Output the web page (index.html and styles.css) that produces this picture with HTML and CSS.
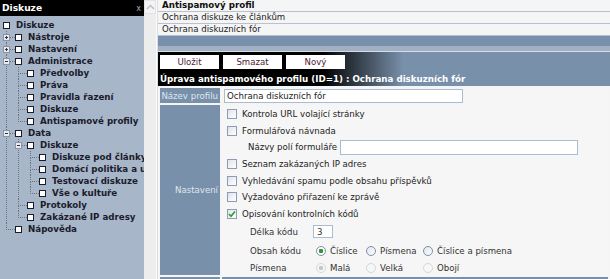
FILE: index.html
```html
<!DOCTYPE html>
<html lang="cs">
<head>
    <meta charset="UTF-8">
    <title>Antispamový profil</title>
    <link rel="stylesheet" href="styles.css">
</head>
<body>
    <div class="app">
        <aside class="side">
            <div class="side-title"><span>Diskuze</span><span class="side-close">x</span></div>
            <ul class="tree">
                <li>
                    <div class="node"><i class="cb"></i>Diskuze</div>
                    <ul>
                        <li><i class="exp plus"></i><div class="node"><i class="cb"></i>Nástroje</div></li>
                        <li><i class="exp plus"></i><div class="node"><i class="cb"></i>Nastavení</div></li>
                        <li><i class="exp"></i><div class="node"><i class="cb"></i>Administrace</div>
                            <ul>
                                <li><div class="node"><i class="cb"></i>Předvolby</div></li>
                                <li><div class="node"><i class="cb"></i>Práva</div></li>
                                <li><div class="node"><i class="cb"></i>Pravidla řazení</div></li>
                                <li><div class="node"><i class="cb"></i>Diskuze</div></li>
                                <li><div class="node"><i class="cb"></i>Antispamové profily</div></li>
                            </ul>
                        </li>
                        <li><i class="exp"></i><div class="node"><i class="cb"></i>Data</div>
                            <ul>
                                <li><i class="exp"></i><div class="node"><i class="cb"></i>Diskuze</div>
                                    <ul>
                                        <li><div class="node"><i class="cb"></i>Diskuze pod články</div></li>
                                        <li><div class="node"><i class="cb"></i>Domácí politika a události</div></li>
                                        <li><div class="node"><i class="cb"></i>Testovací diskuze</div></li>
                                        <li><div class="node"><i class="cb"></i>Vše o kultuře</div></li>
                                    </ul>
                                </li>
                                <li><div class="node"><i class="cb"></i>Protokoly</div></li>
                                <li><div class="node"><i class="cb"></i>Zakázané IP adresy</div></li>
                            </ul>
                        </li>
                        <li><div class="node"><i class="cb"></i>Nápověda</div></li>
                    </ul>
                </li>
            </ul>
        </aside>

        <div class="scrollbar">
            <div class="scroll-up">
                <svg width="9" height="6" viewBox="0 0 9 6"><path d="M1 5L4.5 1.5L8 5" fill="none" stroke="#b8bcc4" stroke-width="1.3"/></svg>
            </div>
        </div>

        <main class="content">
            <div class="list">
                <div class="list-head">Antispamový profil</div>
                <div class="list-row">Ochrana diskuze ke článkům</div>
                <div class="list-row">Ochrana diskuzních fór</div>
            </div>
            <div class="band"></div>
            <div class="band-light"></div>

            <div class="editor-head">
                <div class="toolbar">
                    <button class="btn">Uložit</button>
                    <button class="btn">Smazat</button>
                    <button class="btn">Nový</button>
                </div>
                <div class="editor-title">Úprava antispamového profilu (ID=1) : Ochrana diskuzních fór</div>
            </div>

            <table class="form">
                <tr>
                    <td class="label">Název profilu</td>
                    <td class="value"><div class="field name-field">Ochrana diskuzních fór</div></td>
                </tr>
                <tr>
                    <td class="label">Nastavení</td>
                    <td class="value settings">
                        <div class="opt"><i class="check"></i>Kontrola URL volající stránky</div>
                        <div class="opt"><i class="check"></i>Formulářová návnada</div>
                        <div class="opt sub">Názvy polí formuláře <div class="field names-field"></div></div>
                        <div class="opt"><i class="check"></i>Seznam zakázaných IP adres</div>
                        <div class="opt"><i class="check"></i>Vyhledávání spamu podle obsahu příspěvků</div>
                        <div class="opt"><i class="check"></i>Vyžadováno přiřazení ke zprávě</div>
                        <div class="opt"><i class="check on">
                            <svg width="8" height="8" viewBox="0 0 8 8"><path d="M1 4L3 6.2L7 1.5" fill="none" stroke="#2f9a2a" stroke-width="1.6"/></svg>
                        </i>Opisování kontrolních kódů</div>
                        <div class="subrow">
                            <span class="sublabel">Délka kódu</span>
                            <div class="field len-field">3</div>
                        </div>
                        <div class="subrow">
                            <span class="sublabel">Obsah kódu</span>
                            <div class="radios">
                                <span class="radio-item"><i class="radio on"></i>Číslice</span>
                                <span class="radio-item"><i class="radio"></i>Písmena</span>
                                <span class="radio-item"><i class="radio"></i>Číslice a písmena</span>
                            </div>
                        </div>
                        <div class="subrow last">
                            <span class="sublabel">Písmena</span>
                            <div class="radios">
                                <span class="radio-item"><i class="radio off on"></i>Malá</span>
                                <span class="radio-item"><i class="radio off"></i>Velká</span>
                                <span class="radio-item"><i class="radio off"></i>Obojí</span>
                            </div>
                        </div>
                    </td>
                </tr>
                <tr class="strip">
                    <td></td>
                    <td></td>
                </tr>
            </table>
        </main>
    </div>
</body>
</html>
```

FILE: styles.css
```css
body {
    margin: 0;
    padding: 0;
    width: 610px;
    height: 279px;
    overflow: hidden;
    font-family: 'DejaVu Sans', Verdana, sans-serif;
    font-size: 8.6px;
    color: #222;
    background-color: #f5f5f5;
}

.app {
    display: flex;
    height: 279px;
}

/* levy panel se stromem */
.side {
    width: 144px;
    flex: none;
    background-color: #a7b6c9;
    overflow: hidden;
}

.side-title {
    height: 16px;
    background-color: #000;
    color: #fff;
    font-weight: bold;
    font-size: 9.1px;
    display: flex;
    align-items: center;
    justify-content: space-between;
    padding: 0 3px 0 2px;
}

.side-close {
    color: #aaa;
    font-weight: normal;
    font-size: 8px;
}

.tree, .tree ul {
    list-style: none;
    margin: 0;
    padding: 0;
}

.tree {
    padding: 3px 0 0 3px;
    font-weight: bold;
    font-size: 8.7px;
    color: #1b1b2b;
}

.tree ul {
    padding-left: 12px;
}

.tree ul > li {
    position: relative;
}

.tree ul > li::before {
    content: "";
    position: absolute;
    left: -9px;
    top: 0;
    width: 8px;
    height: 6px;
    border-left: 1px dotted #6b7280;
    border-bottom: 1px dotted #6b7280;
}

.tree ul > li:not(:last-child)::after {
    content: "";
    position: absolute;
    left: -9px;
    top: 6px;
    bottom: 0;
    border-left: 1px dotted #6b7280;
}

.node {
    display: flex;
    align-items: center;
    gap: 6px;
    height: 12px;
    white-space: nowrap;
}

.cb {
    flex: none;
    width: 5px;
    height: 5px;
    border: 1px solid #1b1b2b;
    background-color: #fff;
}

.exp {
    position: absolute;
    z-index: 1;
    left: -12px;
    top: 3px;
    width: 5px;
    height: 5px;
    border: 1px solid #8a94a4;
    background: #e8ecf0 linear-gradient(#333, #333) center / 3px 1px no-repeat;
}

.exp.plus {
    background-image: linear-gradient(#333, #333), linear-gradient(#333, #333);
    background-size: 3px 1px, 1px 3px;
    background-position: center, center;
    background-repeat: no-repeat;
}

/* posuvnik */
.scrollbar {
    width: 12px;
    flex: none;
    background-color: #ededed;
    border-right: 1px solid #fafafa;
}

.scroll-up {
    height: 12px;
    border: 1px solid #e2e2e2;
    background-color: #f4f4f4;
    display: flex;
    align-items: center;
    justify-content: center;
}

/* obsah */
.content {
    flex: 1;
    background-color: #f5f5f5;
    border-left: 1px solid #d9dfe6;
    overflow: hidden;
}

.list-head,
.list-row {
    height: 11px;
    line-height: 11px;
    padding-left: 4px;
    border-bottom: 1px solid #b6c2d1;
}

.list-head {
    font-weight: bold;
    font-size: 8.7px;
    color: #111;
}

.band {
    height: 10px;
    background-color: #7890aa;
}

.band-light {
    height: 5px;
    background-color: #a1b1c3;
    border-bottom: 1px solid #d6dce4;
}

.editor-head {
    background: linear-gradient(to right, #000 0, #000 165px, #7890aa 245px);
    padding: 3px 0 0 2px;
    height: 34px;
    box-sizing: border-box;
}

.toolbar {
    display: flex;
    gap: 4px;
}

.btn {
    width: 59px;
    height: 14px;
    padding: 0;
    border: none;
    background-color: #fff;
    color: #4d2038;
    font-family: 'DejaVu Sans', Verdana, sans-serif;
    font-size: 8.6px;
}

.editor-title {
    margin-top: 5px;
    color: #fff;
    font-weight: bold;
    font-size: 8.7px;
    white-space: nowrap;
}

.form {
    border-spacing: 2px;
    width: 100%;
}

.form td {
    padding: 0;
}

.label {
    width: 58px;
    padding-right: 2px !important;
    background-color: #7890aa;
    color: #dfe6ee;
    text-align: right;
    vertical-align: middle;
    white-space: nowrap;
}

.value {
    height: 15px;
    background-color: #f6f6f6;
    padding-left: 2px !important;
}

.field {
    box-sizing: border-box;
    height: 14px;
    line-height: 12px;
    border: 1px solid #a9bcd6;
    background-color: #fff;
    padding-left: 2px;
}

.name-field {
    width: 239px;
}

.settings {
    padding: 1px 0 0 5px !important;
}

.opt {
    display: flex;
    align-items: center;
    gap: 5px;
    height: 16.6px;
    white-space: nowrap;
}

.opt.sub {
    padding-left: 21px;
    gap: 3px;
}

.names-field {
    width: 238px;
    height: 15px;
}

.check {
    flex: none;
    box-sizing: border-box;
    width: 10px;
    height: 10px;
    border: 1px solid #8d9cb2;
    background: linear-gradient(135deg, #dfe3ea, #fff);
    display: flex;
    align-items: center;
    justify-content: center;
}

.subrow {
    display: flex;
    align-items: center;
    height: 19px;
    padding-left: 23px;
    color: #333;
}

.subrow.last {
    height: 15px;
}

.sublabel {
    width: 63px;
    flex: none;
}

.len-field {
    width: 20px;
    height: 13px;
    padding-left: 3px;
}

.radios {
    display: grid;
    grid-template-columns: 50px 57px auto;
    padding-left: 3px;
}

.radio-item {
    display: flex;
    align-items: center;
    gap: 4px;
}

.radio {
    box-sizing: border-box;
    width: 10px;
    height: 10px;
    border: 1px solid #7d8fac;
    border-radius: 50%;
    background: linear-gradient(135deg, #dfe3ea, #fff);
}

.radio.on {
    background: radial-gradient(circle, #2e9a34 0, #2e9a34 2px, #fff 2.5px);
}

.radio.off {
    border-color: #d4d8de;
    background: #f7f7f7;
}

.radio.off.on {
    background: radial-gradient(circle, #c4c8cc 0, #c4c8cc 2px, #f7f7f7 2.5px);
}

.strip td {
    height: 6px;
    background-color: #7890aa;
}
```
